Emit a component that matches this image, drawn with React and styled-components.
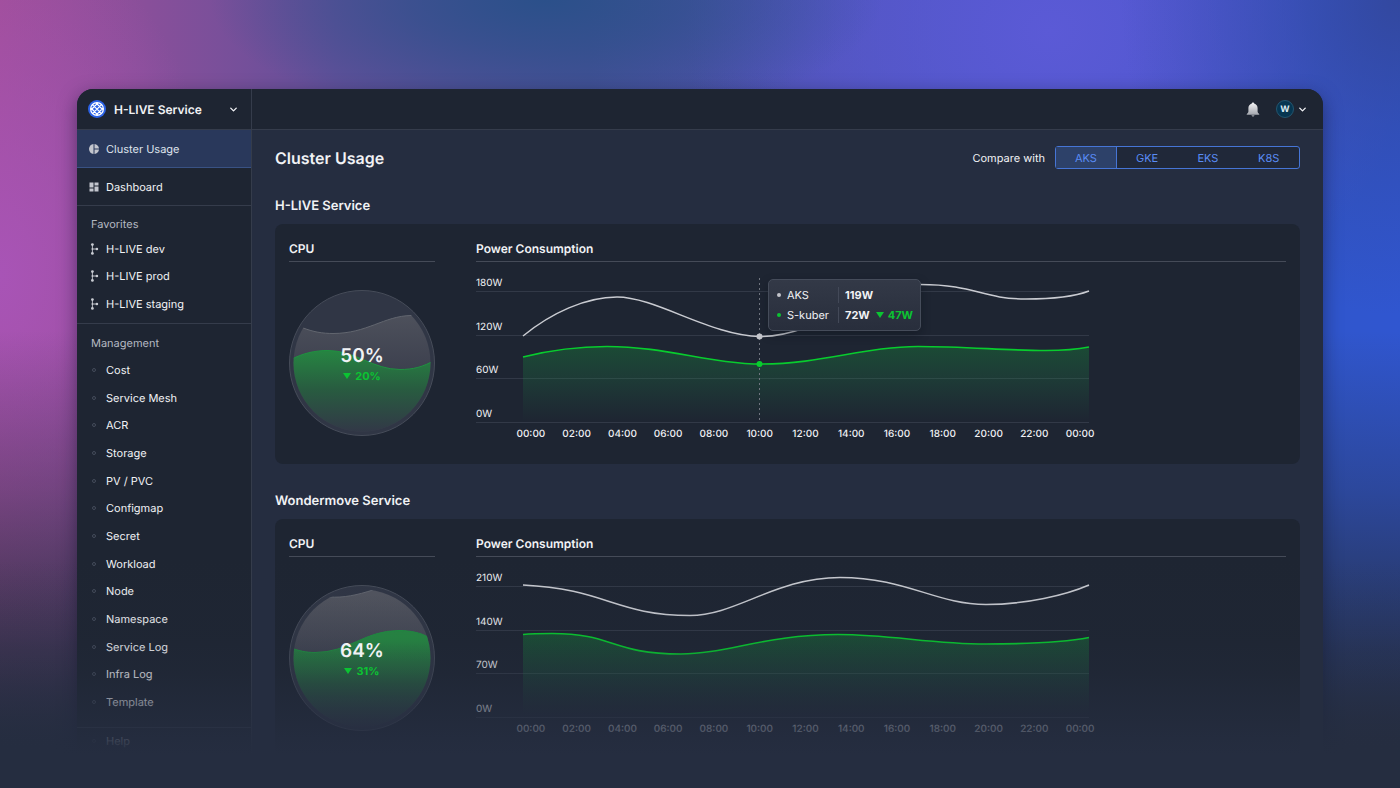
import React, { useId, useState } from "react";
import styled, { createGlobalStyle } from "styled-components";
import { MdDashboard, MdPieChart } from "react-icons/md";
import { ChevronDown } from "lucide-react";

const c = {
  page: "#252d40",
  panel: "#1e2532",
  line: "#353c4b",
  rule: "#454b58",
  text: "#f1f2f5",
  soft: "#b4b8c1",
  blue: "#5a8cf5",
  green: "#0bc432",
};

const GlobalStyle = createGlobalStyle`
  *, *::before, *::after { box-sizing: border-box; }
  body { margin: 0; background: ${c.page}; text-rendering: geometricPrecision; }
  body, button, select { font-family: Inter, "Liberation Sans", sans-serif; }
  button, select { text-rendering: inherit; }
  h1, h2, h3, p, ul { margin: 0; padding: 0; }
  ul { list-style: none; }
`;

const Stage = styled.div`
  position: relative;
  height: 100vh;
  overflow: hidden;
  padding: 89px 77px 0;
  color: ${c.text};
  font-size: 11px;
  background:
    linear-gradient(to bottom, rgba(37, 45, 64, 0) 42%, rgba(37, 45, 64, 0.35) 62%, rgba(37, 45, 64, 0.8) 82%, ${c.page} 95%),
    radial-gradient(ellipse 24% 16% at 39% 0%, #2b508a 0%, rgba(43, 80, 138, 0.65) 40%, rgba(43, 80, 138, 0) 100%),
    radial-gradient(ellipse 20% 40% at 100% 0%, #33489f 0%, rgba(51, 72, 159, 0.5) 40%, rgba(51, 72, 159, 0) 100%),
    radial-gradient(ellipse 26% 40% at 75% 4%, #5b5ad6 0%, rgba(91, 90, 214, 0) 100%),
    radial-gradient(ellipse 16% 45% at 0% 35%, #a854b6 0%, rgba(168, 84, 182, 0) 100%),
    linear-gradient(to right, #a04e98 0%, #8a4f9a 10%, #62509a 24%, #4a5098 42%, #5054b8 60%, #4456cc 84%, #3056cc 94%, #3056d0 100%);
`;

const Fade = styled.div`
  position: absolute;
  inset: auto 0 0;
  height: 230px;
  pointer-events: none;
  background: linear-gradient(
    to bottom,
    rgba(37, 45, 64, 0) 0%,
    rgba(37, 45, 64, 0.1) 34%,
    rgba(37, 45, 64, 0.28) 50%,
    rgba(37, 45, 64, 0.52) 62%,
    rgba(37, 45, 64, 0.76) 74%,
    rgba(37, 45, 64, 0.92) 81%,
    ${c.page} 86%
  );
`;

const Window = styled.div`
  display: grid;
  grid-template-columns: 175px minmax(0, 1fr);
  overflow: hidden;
  border-radius: 16px 16px 0 0;
  background: ${c.page};
`;

const WindowShadow = styled.div`
  border-radius: 16px 16px 0 0;
  box-shadow: 0 6px 18px rgba(14, 18, 40, 0.5);
`;

const Sidebar = styled.aside`
  border-right: 1px solid ${c.line};
  background: ${c.panel};
`;

const Brand = styled.div`
  display: grid;
  grid-template-columns: 18px 1fr 12px;
  align-items: center;
  gap: 8px;
  height: 41px;
  padding: 0 11px;
  border-bottom: 1px solid ${c.line};
`;

const ServiceSelect = styled.select`
  grid-area: 1 / 2 / 2 / 4;
  width: 100%;
  height: 24px;
  padding: 0;
  border: 0;
  appearance: none;
  background: none;
  color: ${c.text};
  font-size: 12px;
  font-weight: 600;
`;

const BrandChevron = styled(ChevronDown)`
  grid-area: 1 / 3;
  pointer-events: none;
`;

const PageLink = styled.a`
  display: flex;
  align-items: center;
  gap: 6px;
  height: 38px;
  padding: 0 11px;
  border-bottom: 1px solid ${(p) => (p.$active ? "#395284" : c.line)};
  background: ${(p) => (p.$active ? "#29385b" : "transparent")};
  color: ${(p) => (p.$active ? "#dfe3ec" : c.text)};
  text-decoration: none;

  svg { color: #c3c6ce; }
`;

const NavGroup = styled.section`
  padding: ${(p) => p.$pad};
  border-bottom: 1px solid ${c.line};
`;

const GroupTitle = styled.h2`
  padding-left: 14px;
  color: ${c.soft};
  font-size: 11px;
  font-weight: 400;
  line-height: 18px;
`;

const NavList = styled.ul`
  display: grid;
  grid-auto-rows: 1fr;
  height: ${(p) => p.$height}px;
  margin-top: ${(p) => p.$gap}px;
`;

const NavLink = styled.a`
  display: flex;
  align-items: center;
  gap: 6px;
  height: 100%;
  padding-left: 12px;
  color: ${c.text};
  text-decoration: none;
`;

const Dot = styled.span`
  width: 4px;
  height: 4px;
  margin: 0 4px 0 3px;
  border: 1px solid #444c5b;
  border-radius: 50%;
`;

const TopBar = styled.header`
  display: flex;
  align-items: center;
  justify-content: flex-end;
  gap: 16px;
  height: 41px;
  padding-right: 15px;
  border-bottom: 1px solid ${c.line};
  background: ${c.panel};
`;

const IconButton = styled.button`
  display: flex;
  align-items: center;
  gap: 3px;
  padding: 0;
  border: 0;
  background: none;
  color: ${c.text};
`;

const Avatar = styled.span`
  width: 18px;
  height: 18px;
  border: 1px solid #24566f;
  border-radius: 50%;
  background: #063651;
  color: #dcebf2;
  font-size: 9px;
  font-weight: 700;
  line-height: 17px;
  text-align: center;
`;

const Content = styled.div`
  padding: 16px 23px 28px;
`;

const TitleRow = styled.div`
  display: flex;
  align-items: center;
  justify-content: space-between;
  height: 23px;
`;

const Title = styled.h1`
  font-size: 16px;
  font-weight: 600;
`;

const Compare = styled.div`
  display: flex;
  align-items: center;
  gap: 10px;
`;

const Segments = styled.div`
  display: grid;
  grid-template-columns: repeat(4, 1fr);
  width: 245px;
  height: 23px;
  border: 1px solid #4675d6;
  border-radius: 3px;
  background: #202839;
`;

const Segment = styled.button`
  padding: 0;
  border: 0;
  border-right: ${(p) => (p.$on ? "1px solid #4675d6" : "0")};
  background: ${(p) => (p.$on ? "#2d4169" : "transparent")};
  color: ${c.blue};
  font-size: 11px;
`;

const Service = styled.section`
  margin-top: 27px;
`;

const ServiceTitle = styled.h2`
  font-size: 13px;
  font-weight: 600;
  line-height: 20px;
`;

const Card = styled.div`
  display: grid;
  grid-template-columns: 146px minmax(0, 1fr);
  gap: 41px;
  margin-top: 8px;
  padding: 14px 14px 22px;
  border-radius: 8px;
  background: ${c.panel};
`;

const CardTitle = styled.h3`
  padding-bottom: 1px;
  border-bottom: 1px solid ${c.rule};
  font-size: 12px;
  font-weight: 600;
  line-height: 22px;
`;

const GaugeBox = styled.div`
  display: grid;
  height: 146px;
  margin-top: 28px;

  > * { grid-area: 1 / 1; }
`;

const GaugeText = styled.div`
  z-index: 1;
  align-self: center;
  padding-top: 2px;
  text-align: center;
`;

const GaugeValue = styled.p`
  font-size: 19px;
  font-weight: 600;
  line-height: 24px;
`;

const Delta = styled.span`
  display: inline-flex;
  align-items: center;
  gap: 4px;
  color: ${c.green};
  font-size: 11px;
  font-weight: 700;
  line-height: 16px;

  &::before {
    content: "";
    border: solid transparent;
    border-width: 6px 4px 0;
    border-top-color: currentColor;
  }
`;

const ChartBox = styled.div`
  position: relative;
  width: 627px;
  margin-top: 11px;
`;

const Scale = styled.div`
  display: grid;
  grid-template-rows: 19px repeat(3, 1fr);
  width: 613px;
  height: 150px;
`;

const ScaleLine = styled.div`
  display: flex;
  align-items: flex-end;
  padding-bottom: 1px;
  border-bottom: 1px solid #323947;
  font-size: 10px;
  line-height: 14px;
`;

const Plot = styled.svg`
  position: absolute;
  top: 0;
  left: 0;
  overflow: visible;
`;

const Times = styled.div`
  display: grid;
  grid-template-columns: repeat(13, 1fr);
  width: 595px;
  margin: 4px 0 0 32px;
  font-size: 10px;
  font-weight: 500;
  line-height: 15px;
  text-align: center;
`;

const Tooltip = styled.div`
  position: absolute;
  top: 6px;
  left: 292px;
  display: grid;
  gap: 4px;
  width: 153px;
  padding: 7px 8px;
  border: 1px solid #454c5a;
  border-radius: 5px;
  background: linear-gradient(#333947, #282e3c);
  box-shadow: 0 4px 10px rgba(10, 14, 24, 0.35);
`;

const TooltipRow = styled.div`
  display: grid;
  grid-template-columns: 4px 45px auto auto;
  justify-content: start;
  align-items: center;
  column-gap: 6px;
  line-height: 16px;
  white-space: nowrap;

  &::before {
    content: "";
    width: 4px;
    height: 4px;
    border-radius: 50%;
    background: ${(p) => p.$color};
  }

  strong {
    padding-left: 6px;
    border-left: 1px solid #434958;
    font-weight: 700;
  }
`;

function Logo() {
  return (
    <svg width="18" height="18" viewBox="0 0 18 18" aria-hidden="true">
      <circle cx="9" cy="9" r="9" fill="#2b62e6" />
      <g fill="none" stroke="#fff" strokeWidth="1.2">
        <circle cx="9" cy="9" r="6.4" />
        <path d="M4.4 4.6 13.5 13.6M2.9 8 10 15.1M8 2.9 15.1 10M13.6 4.6 4.5 13.6M10 2.9 2.9 10M15.1 8 8 15.1" />
      </g>
    </svg>
  );
}

function Branch() {
  return (
    <svg width="11" height="12" viewBox="0 0 11 12" aria-hidden="true">
      <g fill="#c9ccd3">
        <circle cx="3.4" cy="1.6" r="1.4" />
        <circle cx="3.4" cy="10.4" r="1.4" />
        <circle cx="3.4" cy="6" r=".9" />
        <circle cx="7.9" cy="6" r="1.3" />
      </g>
      <path d="M3.4 1.5v9M3.4 6h4.5" stroke="#c9ccd3" strokeWidth=".9" />
    </svg>
  );
}

function Bell() {
  return (
    <svg width="14" height="15" viewBox="0 0 14 15" aria-hidden="true">
      <defs>
        <linearGradient id="bell" x1="0" y1="0" x2="0" y2="1">
          <stop offset="0" stopColor="#f4f4f6" />
          <stop offset="1" stopColor="#a3a6ad" />
        </linearGradient>
      </defs>
      <path
        d="M7 .4c-.7 0-1.1.5-1.2 1.1C3.700 2.100 2.400 3.800 2.400 6v3.600c0 .9-.4 1.300-1.100 1.800-.5.3-.7.6-.7.9 0 .3.2.5.6.5h11.600c.4 0 .6-.2.6-.5 0-.3-.2-.6-.7-.9-.7-.5-1.100-.9-1.100-1.800V6c0-2.200-1.300-3.900-3.400-4.500C8.100.9 7.700.4 7 .4Z"
        fill="url(#bell)"
      />
      <path d="M5.500 13.200h3c-.2.900-.7 1.400-1.500 1.400s-1.300-.5-1.500-1.400Z" fill="#a3a6ad" />
    </svg>
  );
}

function Gauge({ value, delta, back, front }) {
  const id = useId();
  return (
    <GaugeBox>
      <svg width="146" height="146" viewBox="0 0 146 146" aria-hidden="true">
        <defs>
          <clipPath id={`${id}c`}>
            <circle cx="73" cy="73" r="68.500" />
          </clipPath>
          <linearGradient id={`${id}b`} gradientUnits="userSpaceOnUse" x1="0" y1="10" x2="0" y2="95">
            <stop offset="0" stopColor="#52555f" />
            <stop offset="1" stopColor="#383c4b" />
          </linearGradient>
          <linearGradient id={`${id}f`} gradientUnits="userSpaceOnUse" x1="0" y1="56" x2="0" y2="142">
            <stop offset="0" stopColor="#268a42" />
            <stop offset=".5" stopColor="#285c40" />
            <stop offset="1" stopColor="#323847" />
          </linearGradient>
        </defs>
        <circle cx="73" cy="73" r="72.500" fill="#303645" stroke="#464c59" />
        <g clipPath={`url(#${id}c)`}>
          <path d={`${back}V146H0Z`} fill={`url(#${id}b)`} />
          <path d={back} fill="none" stroke="#62666f" />
          <path d={`${front}V146H0Z`} fill={`url(#${id}f)`} />
          <path d={front} fill="none" stroke="#1f9240" />
        </g>
      </svg>
      <GaugeText>
        <GaugeValue>{value}</GaugeValue>
        <Delta>{delta}</Delta>
      </GaugeText>
    </GaugeBox>
  );
}

const hours = ["00:00", "02:00", "04:00", "06:00", "08:00", "10:00", "12:00", "14:00", "16:00", "18:00", "20:00", "22:00", "00:00"];

function PowerChart({ scale, other, own, tooltip }) {
  const id = useId();
  return (
    <ChartBox>
      <Scale>
        {scale.map((s) => (
          <ScaleLine key={s}>{s}</ScaleLine>
        ))}
      </Scale>
      <Plot width="613" height="150" viewBox="0 0 613 150" aria-hidden="true">
        <defs>
          <linearGradient id={id} gradientUnits="userSpaceOnUse" x1="0" y1="66" x2="0" y2="148">
            <stop offset="0" stopColor="#12a038" stopOpacity=".34" />
            <stop offset=".5" stopColor="#1c9048" stopOpacity=".2" />
            <stop offset="1" stopColor="#1c9048" stopOpacity="0" />
          </linearGradient>
        </defs>
        <path d={`${own}V149H47Z`} fill={`url(#${id})`} />
        {tooltip && <path d="M283.500 5V149" stroke="#70757f" strokeDasharray="2 3" />}
        <path d={other} fill="none" stroke="#c9cbd1" strokeWidth="1.500" />
        <path d={own} fill="none" stroke="#08cc2e" strokeWidth="1.600" />
        {tooltip && (
          <>
            <circle cx="283.500" cy="63.500" r="3" fill="#c3c5cb" />
            <circle cx="283.500" cy="91" r="3" fill="#08cc2e" />
          </>
        )}
      </Plot>
      <Times>
        {hours.map((h, i) => (
          <span key={i}>{h}</span>
        ))}
      </Times>
      {tooltip && (
        <Tooltip role="tooltip">
          <TooltipRow $color="#c3c5cb">
            <span>AKS</span>
            <strong>119W</strong>
          </TooltipRow>
          <TooltipRow $color={c.green}>
            <span>S-kuber</span>
            <strong>72W</strong>
            <Delta>47W</Delta>
          </TooltipRow>
        </Tooltip>
      )}
    </ChartBox>
  );
}

const services = [
  {
    name: "H-LIVE Service",
    gauge: {
      value: "50%",
      delta: "20%",
      back: "M0 31C6 34 10 36 13 37.500C24 42 34 43.500 44 43.500C78 43.500 95 26 122 25.500L146 25",
      front: "M0 70.500C14 63 26 60.500 39 60.500C66 60.500 84 79.500 111 79.500C124 79.500 134 77 146 70",
    },
    chart: {
      scale: ["180W", "120W", "60W", "0W"],
      other: "M47 63C75 40 110 24 141 24C180 24 235 63 284 63.500C345 63.500 390 11.500 444 11.500C500 11.500 505 26 550 26C580 26 600 23 613 18",
      own: "M47 84C75 77 100 73.500 131 73.500C190 73.500 235 91 286 91C345 91 390 73.500 442 73.500C490 73.500 530 77.500 570 77.500C590 77.500 603 76 613 74",
      tooltip: true,
    },
  },
  {
    name: "Wondermove Service",
    gauge: {
      value: "64%",
      delta: "31%",
      back: "M0 12H40C55 13 68 10 84 5L88 0H146",
      front: "M0 62C9 66 18 67.500 26 67.500C60 67.500 75 45.500 110 45.500C122 45.500 132 48 139 52L146 56",
    },
    chart: {
      scale: ["210W", "140W", "70W", "0W"],
      other: "M47 17C130 21 140 47.500 214 47.500C260 47.500 300 9.500 364 9.500C430 9.500 460 36.500 510 36.500C550 36.500 590 27 613 17",
      own: "M47 66.500C57 65.500 65 65.500 76 65.500C138 65.500 135 86 205 86C250 86 290 66.500 362 66.500C415 66.500 455 76 510 76C555 76 590 74 613 69.500",
    },
  },
];

const favorites = ["H-LIVE dev", "H-LIVE prod", "H-LIVE staging"];
const management = ["Cost", "Service Mesh", "ACR", "Storage", "PV / PVC", "Configmap", "Secret", "Workload", "Node", "Namespace", "Service Log", "Infra Log", "Template"];
const targets = ["AKS", "GKE", "EKS", "K8S"];

export default function App() {
  const [target, setTarget] = useState("AKS");
  return (
    <Stage>
      <GlobalStyle />
      <WindowShadow>
        <Window>
          <Sidebar>
            <Brand>
              <Logo />
              <ServiceSelect aria-label="Service" defaultValue="H-LIVE Service">
                <option>H-LIVE Service</option>
                <option>Wondermove Service</option>
              </ServiceSelect>
              <BrandChevron size={11} strokeWidth={3} />
            </Brand>
            <nav>
              <PageLink href="#usage" $active aria-current="page">
                <MdPieChart size={12} />
                Cluster Usage
              </PageLink>
              <PageLink href="#dashboard">
                <MdDashboard size={12} />
                Dashboard
              </PageLink>
              <NavGroup $pad="9px 0 5px">
                <GroupTitle>Favorites</GroupTitle>
                <NavList $height={83} $gap={2}>
                  {favorites.map((f) => (
                    <li key={f}>
                      <NavLink href="#favorite">
                        <Branch />
                        {f}
                      </NavLink>
                    </li>
                  ))}
                </NavList>
              </NavGroup>
              <NavGroup $pad="10px 0 11px">
                <GroupTitle>Management</GroupTitle>
                <NavList $height={360} $gap={4}>
                  {management.map((m) => (
                    <li key={m}>
                      <NavLink href="#management">
                        <Dot />
                        {m}
                      </NavLink>
                    </li>
                  ))}
                </NavList>
              </NavGroup>
              <NavList $height={26} $gap={0}>
                <li>
                  <NavLink href="#help">
                    <Dot />
                    Help
                  </NavLink>
                </li>
              </NavList>
            </nav>
          </Sidebar>
          <main>
            <TopBar>
              <IconButton aria-label="Notifications">
                <Bell />
              </IconButton>
              <IconButton aria-label="Account">
                <Avatar>W</Avatar>
                <ChevronDown size={11} strokeWidth={3} />
              </IconButton>
            </TopBar>
            <Content>
              <TitleRow>
                <Title>Cluster Usage</Title>
                <Compare>
                  <span id="compare">Compare with</span>
                  <Segments role="group" aria-labelledby="compare">
                    {targets.map((t) => (
                      <Segment key={t} $on={t === target} aria-pressed={t === target} onClick={() => setTarget(t)}>
                        {t}
                      </Segment>
                    ))}
                  </Segments>
                </Compare>
              </TitleRow>
              {services.map((s) => (
                <Service key={s.name}>
                  <ServiceTitle>{s.name}</ServiceTitle>
                  <Card>
                    <div>
                      <CardTitle>CPU</CardTitle>
                      <Gauge {...s.gauge} />
                    </div>
                    <div>
                      <CardTitle>Power Consumption</CardTitle>
                      <PowerChart {...s.chart} />
                    </div>
                  </Card>
                </Service>
              ))}
            </Content>
          </main>
        </Window>
      </WindowShadow>
      <Fade />
    </Stage>
  );
}
